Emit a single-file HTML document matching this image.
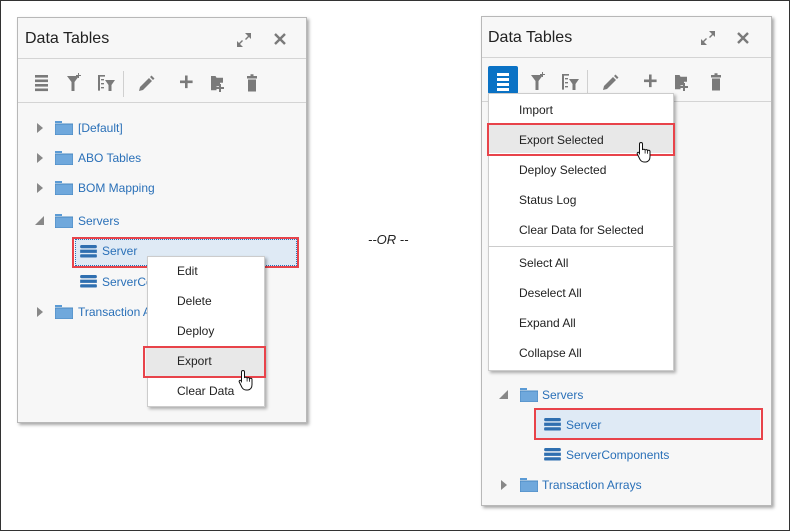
<!DOCTYPE html>
<html><head><meta charset="utf-8"><style>
*{margin:0;padding:0;box-sizing:border-box}
body{width:790px;height:531px;background:#fff;position:relative;overflow:hidden;font-family:"Liberation Sans",Arial,sans-serif}
.frame{position:absolute;left:0;top:0;width:790px;height:531px;border:1px solid #333}
.panel{position:absolute;background:#f7f7f7;border:1px solid #b8b8b8;box-shadow:2px 2px 3px rgba(0,0,0,.35)}
.a{position:absolute;white-space:nowrap}
.title{font-size:16px;color:#222}
.hr{position:absolute;height:1px;background:#d4d4d4}
.t{font-size:12px;color:#2a70b8}
.m{font-size:12px;color:#222}
.menu{position:absolute;background:#fff;border:1px solid #ccc;box-shadow:2px 2px 3px rgba(0,0,0,.3)}
.red{position:absolute;border:2px solid #e8434a}
.tri{position:absolute;width:0;height:0;border-top:5px solid transparent;border-bottom:5px solid transparent;border-left:6px solid #888}
</style></head><body>
<div class="frame"></div>

<svg width="0" height="0" style="position:absolute">
<defs>
<symbol id="fold" viewBox="0 0 18 14"><rect x="0" y="0" width="7" height="2" fill="#5b9bd5"/><rect x="0" y="3" width="18" height="11" fill="#6fa8dc" stroke="#4a88c2" stroke-width="1"/></symbol>
<symbol id="db" viewBox="0 0 18 14"><rect x="0" y="0" width="18" height="3.5" rx="1.5" fill="#2f6fb0"/><rect x="0" y="5" width="18" height="3.5" fill="#2f6fb0"/><rect x="0" y="10" width="18" height="3.5" rx="1" fill="#2f6fb0"/></symbol>
<symbol id="hand" viewBox="0 0 16 22"><path d="M5 1.5c1 0 1.5.6 1.5 1.5v6c.3-1 2.5-1 2.6.3.4-1 2.4-.9 2.5.4.5-.8 2.4-.6 2.4.8v5c0 3-1.5 5-4 5.5H8c-2 0-3-1-4-2.5L1.3 13c-.6-1 .6-2.2 1.6-1.5L3.5 12.5V3C3.5 2.1 4 1.5 5 1.5z" fill="#fff" stroke="#111" stroke-width="1"/><path d="M9.1 9.5v3M11.6 10.2v2.6" stroke="#111" stroke-width=".8"/></symbol>
<symbol id="tb" viewBox="0 0 250 45">
<g fill="#7a7a7a">
<rect x="15" y="15" width="13" height="2.6"/><rect x="15" y="19.5" width="13" height="2.6"/><rect x="15" y="24" width="13" height="2.6"/><rect x="15" y="28.5" width="13" height="2.6"/>
<path d="M47 16h12l-4.5 6v9h-3v-9z"/><path d="M58 13h1v5h-1zM56 15h5v1h-5z"/>
<path d="M78 15h7v1.6h-5v14h-2z M81 19h3v1.4h-3z M81 23h3v1.4h-3z M81 27h3v1.4h-3z M85 20h10l-3.5 5v6h-3v-6z"/>
<rect x="103" y="11" width="1" height="26" fill="#d0d0d0"/>
<path d="M119 31l1-4 9-9 3 3-9 9zM130 17l1.5-1.5 3 3-1.5 1.5z"/>
<path d="M160 20.5h5v-5h2.6v5h5v2.6h-5v5h-2.6v-5h-5z"/>
<path d="M191 16h4.5l1 1.8h6.5v5h-3v3.5h-3.5v4h-5.5z M199 24h2v3h3v2h-3v3h-2v-3h-3v-2h3z"/>
<path d="M227 16h3.5v-1.8h3v1.8h3.5v2.5h-10z M228 19.5h8v12h-8z"/>
</g></symbol>
</defs></svg>

<!-- LEFT PANEL -->
<div class="panel" style="left:17px;top:17px;width:290px;height:406px"></div>
<div class="a title" style="left:25px;top:30px">Data Tables</div>
<svg class="a" style="left:236px;top:32px" width="16" height="16" viewBox="0 0 16 16"><g fill="#7a7a7a"><path d="M9 1h6v6l-2-2-3 3-1-1 3-3z"/><path d="M7 15H1V9l2 2 3-3 1 1-3 3z"/></g></svg>
<svg class="a" style="left:274px;top:33px" width="12" height="12" viewBox="0 0 12 12"><path d="M1 1L11 11M11 1L1 11" stroke="#7a7a7a" stroke-width="2.4"/></svg>
<div class="hr" style="left:18px;top:58px;width:288px"></div>
<svg class="a" style="left:20px;top:60px" width="250" height="45"><use href="#tb"/></svg>
<div class="hr" style="left:18px;top:102px;width:288px"></div>

<div class="tri" style="left:37px;top:123px"></div><svg class="a" style="left:55px;top:121px" width="18" height="14"><use href="#fold"/></svg><div class="a t" style="left:78px;top:121px">[Default]</div>
<div class="tri" style="left:37px;top:153px"></div><svg class="a" style="left:55px;top:151px" width="18" height="14"><use href="#fold"/></svg><div class="a t" style="left:78px;top:151px">ABO Tables</div>
<div class="tri" style="left:37px;top:183px"></div><svg class="a" style="left:55px;top:181px" width="18" height="14"><use href="#fold"/></svg><div class="a t" style="left:78px;top:181px">BOM Mapping</div>
<svg class="a" style="left:35px;top:216px" width="9" height="9"><path d="M9 0V9H0z" fill="#888"/></svg><svg class="a" style="left:55px;top:214px" width="18" height="14"><use href="#fold"/></svg><div class="a t" style="left:78px;top:214px">Servers</div>
<div class="a" style="left:75px;top:239px;width:222px;height:27px;background:#dfeaf5;border:1px dotted #2a70b8"></div>
<div class="red" style="left:72px;top:237px;width:227px;height:31px"></div>
<svg class="a" style="left:80px;top:245px" width="17" height="13"><use href="#db"/></svg><div class="a t" style="left:102px;top:244px">Server</div>
<svg class="a" style="left:80px;top:275px" width="17" height="13"><use href="#db"/></svg><div class="a t" style="left:102px;top:275px">ServerComponents</div>
<div class="tri" style="left:37px;top:307px"></div><svg class="a" style="left:55px;top:305px" width="18" height="14"><use href="#fold"/></svg><div class="a t" style="left:78px;top:305px">Transaction Arrays</div>

<div class="menu" style="left:147px;top:256px;width:118px;height:151px"></div>
<div class="a m" style="left:177px;top:264px">Edit</div>
<div class="a m" style="left:177px;top:294px">Delete</div>
<div class="a m" style="left:177px;top:324px">Deploy</div>
<div class="a" style="left:146px;top:348px;width:118px;height:28px;background:#e8e8e8"></div>
<div class="red" style="left:143px;top:346px;width:123px;height:32px"></div>
<div class="a m" style="left:177px;top:354px">Export</div>
<div class="a m" style="left:177px;top:384px">Clear Data</div>
<svg class="a" style="left:238px;top:369px" width="16" height="22"><use href="#hand"/></svg>

<div class="a" style="left:368px;top:232px;font-size:13px;font-style:italic;color:#222">--OR --</div>

<!-- RIGHT PANEL -->
<div class="panel" style="left:481px;top:16px;width:291px;height:490px"></div>
<div class="a title" style="left:488px;top:29px">Data Tables</div>
<svg class="a" style="left:700px;top:30px" width="16" height="16" viewBox="0 0 16 16"><g fill="#7a7a7a"><path d="M9 1h6v6l-2-2-3 3-1-1 3-3z"/><path d="M7 15H1V9l2 2 3-3 1 1-3 3z"/></g></svg>
<svg class="a" style="left:737px;top:32px" width="12" height="12" viewBox="0 0 12 12"><path d="M1 1L11 11M11 1L1 11" stroke="#7a7a7a" stroke-width="2.4"/></svg>
<div class="hr" style="left:482px;top:57px;width:289px"></div>
<svg class="a" style="left:484px;top:59px" width="250" height="45"><use href="#tb"/></svg>
<div class="a" style="left:488px;top:66px;width:30px;height:28px;background:#0a72c5;border-radius:2px"></div>
<div class="a" style="left:497px;top:73px;width:12px;height:2.5px;background:#fff"></div>
<div class="a" style="left:497px;top:78px;width:12px;height:2.5px;background:#fff"></div>
<div class="a" style="left:497px;top:83px;width:12px;height:2.5px;background:#fff"></div>
<div class="a" style="left:497px;top:88px;width:12px;height:2.5px;background:#fff"></div>
<div class="hr" style="left:482px;top:101px;width:289px"></div>

<div class="menu" style="left:488px;top:93px;width:186px;height:278px"></div>
<div class="a m" style="left:519px;top:103px">Import</div>
<div class="a" style="left:489px;top:125px;width:184px;height:28px;background:#e8e8e8"></div>
<div class="red" style="left:487px;top:123px;width:188px;height:33px"></div>
<div class="a m" style="left:519px;top:133px">Export Selected</div>
<svg class="a" style="left:636px;top:141px" width="16" height="22"><use href="#hand"/></svg>
<div class="a m" style="left:519px;top:163px">Deploy Selected</div>
<div class="a m" style="left:519px;top:193px">Status Log</div>
<div class="a m" style="left:519px;top:223px">Clear Data for Selected</div>
<div class="a" style="left:489px;top:246px;width:184px;height:1px;background:#ccc"></div>
<div class="a m" style="left:519px;top:256px">Select All</div>
<div class="a m" style="left:519px;top:286px">Deselect All</div>
<div class="a m" style="left:519px;top:316px">Expand All</div>
<div class="a m" style="left:519px;top:346px">Collapse All</div>

<svg class="a" style="left:499px;top:390px" width="9" height="9"><path d="M9 0V9H0z" fill="#888"/></svg><svg class="a" style="left:520px;top:388px" width="18" height="14"><use href="#fold"/></svg><div class="a t" style="left:542px;top:388px">Servers</div>
<div class="a" style="left:536px;top:410px;width:224px;height:28px;background:#dfeaf5"></div>
<div class="red" style="left:534px;top:408px;width:229px;height:32px"></div>
<svg class="a" style="left:544px;top:418px" width="17" height="13"><use href="#db"/></svg><div class="a t" style="left:566px;top:418px">Server</div>
<svg class="a" style="left:544px;top:448px" width="17" height="13"><use href="#db"/></svg><div class="a t" style="left:566px;top:448px">ServerComponents</div>
<div class="tri" style="left:501px;top:480px"></div><svg class="a" style="left:520px;top:478px" width="18" height="14"><use href="#fold"/></svg><div class="a t" style="left:542px;top:478px">Transaction Arrays</div>
</body></html>
